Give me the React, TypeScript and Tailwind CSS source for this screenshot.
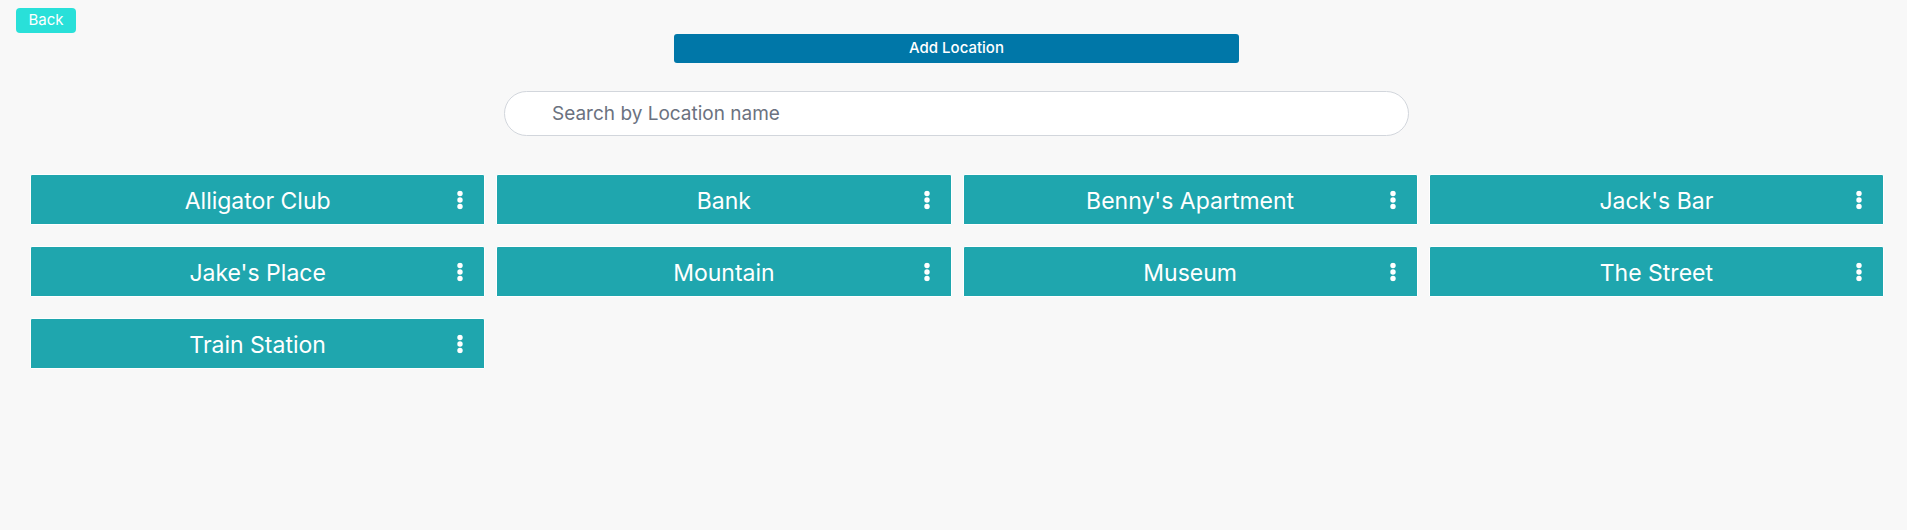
import React from "react";

const locations = [
  "Alligator Club",
  "Bank",
  "Benny's Apartment",
  "Jack's Bar",
  "Jake's Place",
  "Mountain",
  "Museum",
  "The Street",
  "Train Station",
];

function Kebab() {
  return (
    <svg width="6" height="19" viewBox="0 0 6 19" className="absolute right-[21px] top-1/2 -translate-y-1/2">
      <circle cx="3" cy="3" r="2.7" fill="#ffffff" />
      <circle cx="3" cy="9.5" r="2.7" fill="#ffffff" />
      <circle cx="3" cy="16" r="2.7" fill="#ffffff" />
    </svg>
  );
}

export default function App() {
  return (
    <div
      className="min-h-[530px] w-full bg-[#f8f8f8] pt-[8px]"
      style={{ fontFamily: "Inter, 'Noto Sans', sans-serif" }}
    >
      <div className="pl-[16px]">
        <button className="flex h-[25px] w-[60px] items-center justify-center rounded-[4px] bg-[#29e0d9] text-[15px] font-normal text-white">
          Back
        </button>
      </div>
      <div className="mt-[1px] pl-[674px]">
        <button className="flex h-[29px] w-[565px] items-center justify-center rounded-[3px] bg-[#0077a8] text-[15px] font-medium text-white">
          Add Location
        </button>
      </div>
      <div className="mt-[28px] pl-[504px]">
        <input
          type="text"
          placeholder="Search by Location name"
          className="h-[45px] w-[905px] rounded-full border border-[#d2d6dc] bg-white pl-[47px] text-[19px] text-[#374151] outline-none placeholder:text-[#6b7280]"
        />
      </div>
      <div className="mt-[38px] grid grid-cols-4 gap-x-[11px] gap-y-[21px] pl-[30px] pr-[23px]">
        {locations.map((name) => (
          <div
            key={name}
            className="relative flex h-[51px] items-center justify-center rounded-t-[2px] border border-white bg-[#1fa6ae] pt-[3px] text-[23px] font-normal text-white"
          >
            <span>{name}</span>
            <Kebab />
          </div>
        ))}
      </div>
    </div>
  );
}
